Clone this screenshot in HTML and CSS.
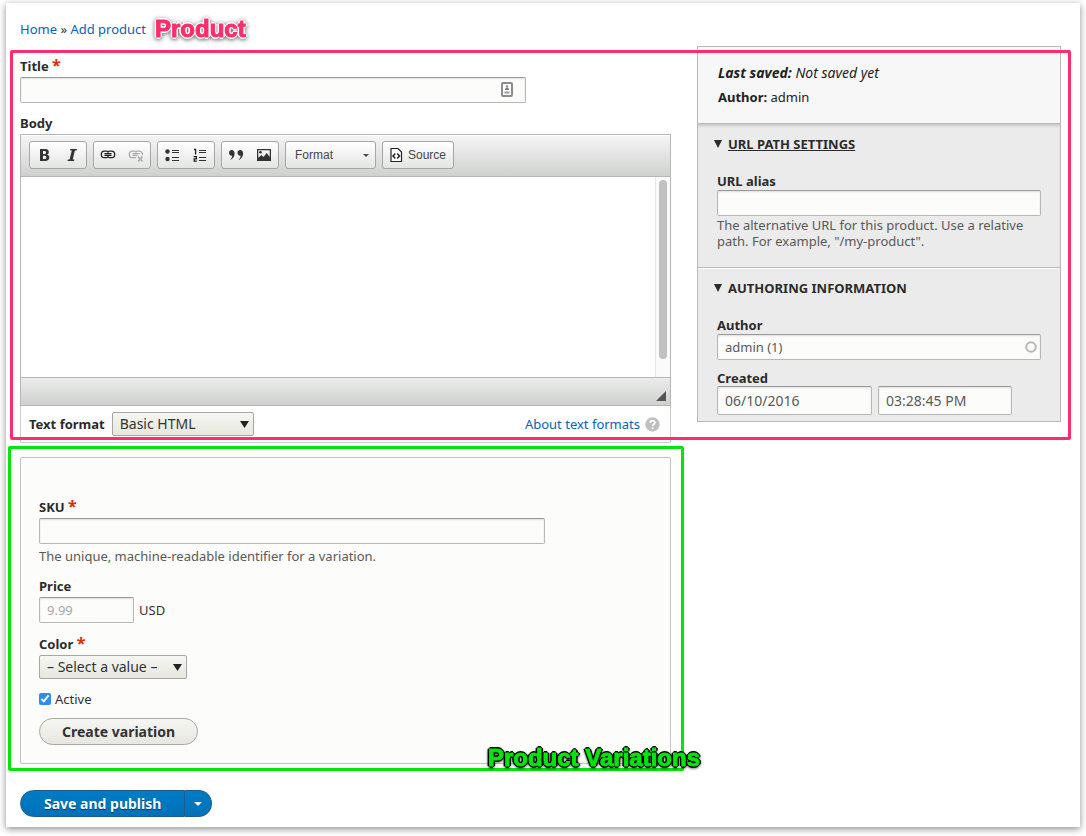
FILE: index.html
```
<!DOCTYPE html>
<html lang="en">
<head>
<meta charset="utf-8">
<meta name="viewport" content="width=device-width, initial-scale=1">
<title>Add product</title>
<link rel="stylesheet" href="styles.css">
</head>
<body>
<form class="sheet">
  <header class="top">
    <nav class="crumbs" aria-label="Breadcrumb"><a href="#">Home</a> » <a href="#">Add product</a></nav>
    <strong class="tag tag-product">Product</strong>
  </header>

  <section class="product">
    <div class="main">
      <div class="item">
        <label class="label" for="title">Title <span class="req">*</span></label>
        <div class="field wide">
          <input class="text" id="title" type="text">
          <svg class="card" width="12" height="15" viewBox="0 0 12 15" aria-hidden="true"><rect x="1" y="1" width="10" height="13" rx="1" fill="#fff" stroke="#8c8c8c" stroke-width="2"/><circle cx="6" cy="4.500" r="1.200" fill="#888"/><path d="M4 8c0-3 4-3 4 0z" fill="#777"/><path d="M3.500 10.500h5" stroke="#999" stroke-width="2"/></svg>
        </div>
      </div>

      <label class="label" for="body">Body</label>
      <div class="editor">
        <div class="toolbar">
          <div class="group">
            <button type="button" class="tool" aria-label="Bold"><svg width="16" height="16" viewBox="0 0 16 16"><path fill-rule="evenodd" d="M4 2h5c2.800 0 3.800 1.200 3.800 3 0 1.400-.7 2.300-1.800 2.700 1.500.3 2.300 1.300 2.300 2.900C13.300 12.900 11.800 14 9 14H4zm3 2v3h1.300c1.200 0 1.700-.5 1.700-1.500S9.400 4 8.300 4zm0 4.800V12h1.500c1.200 0 1.800-.6 1.800-1.600s-.6-1.600-1.800-1.600z"/></svg></button>
            <button type="button" class="tool" aria-label="Italic"><svg width="16" height="16" viewBox="0 0 16 16"><path d="M6.500 2H13l-.4 1.600h-1.700L8.700 12.400h1.800L10 14H3.500l.4-1.600h1.700l2.200-8.800H6z"/></svg></button>
          </div>
          <div class="group">
            <button type="button" class="tool" aria-label="Link"><svg width="16" height="16" viewBox="0 0 16 16"><g fill="none" stroke="#222" stroke-width="1.300"><path d="M8.500 5.500C8 4.500 7.500 4.200 6.500 4.200h-2a3.200 3.200 0 0 0 0 6.400h2c1 0 1.500-.4 2-1.300M7.500 5.500C8 4.500 8.500 4.200 9.500 4.200h2a3.200 3.200 0 0 1 0 6.400h-2c-1 0-1.500-.4-2-1.300M4.500 6.600h7M4.500 8.300h7"/></g></svg></button>
            <button type="button" class="tool" aria-label="Unlink" disabled><svg width="16" height="16" viewBox="0 0 16 16"><g fill="none" stroke="#aaa" stroke-width="1.300"><path d="M8.500 5.500C8 4.500 7.500 4.200 6.500 4.200h-2a3.200 3.200 0 0 0 0 6.400h3.500M7.500 5.500C8 4.500 8.500 4.200 9.500 4.200h2a3.200 3.200 0 0 1 3 3.500M4.500 6.600h7M4.500 8.300h5"/><path stroke-width="1.600" d="M10 9.500l4.500 5M14.500 9.500l-4.500 5"/></g></svg></button>
          </div>
          <div class="group">
            <button type="button" class="tool" aria-label="Bulleted list"><svg width="16" height="16" viewBox="0 0 16 16"><circle cx="3.500" cy="4.500" r="2.200"/><circle cx="3.500" cy="12" r="2.200"/><path d="M8 3h7v1H8zM8 5h7v1H8zM8 10h7v1H8zM8 13h7v1H8z"/></svg></button>
            <button type="button" class="tool" aria-label="Numbered list"><svg width="16" height="16" viewBox="0 0 16 16"><path d="M7 3h7v1H7zM7 5h7v1H7zM7 10h7v1H7zM7 13h7v1H7z"/><path fill="none" stroke="#222" stroke-width="1.300" d="M2 2.500h1.600v5M1.600 9.700h2.800v2.200H2.200v2.300h2.700"/></svg></button>
          </div>
          <div class="group">
            <button type="button" class="tool" aria-label="Block quote"><svg width="16" height="16" viewBox="0 0 16 16"><path d="M1 5.800C1 4 2.200 3 3.700 3c1.700 0 2.900 1.300 2.900 3.500 0 3.200-1.800 5.500-4.600 6.500 1.300-1.200 2.100-2.600 2.200-4.300C2.300 9 1 7.700 1 5.800zM9.500 5.800C9.500 4 10.700 3 12.200 3c1.700 0 2.900 1.300 2.900 3.500 0 3.200-1.800 5.500-4.600 6.500 1.300-1.200 2.100-2.600 2.200-4.300-1.900.3-3.200-1-3.200-2.900z"/></svg></button>
            <button type="button" class="tool" aria-label="Image"><svg width="16" height="16" viewBox="0 0 16 16"><path fill-rule="evenodd" d="M1 2h14v12H1zm1.300 1.300v7.500L5.500 8l2 2 3.200-4 3 4V3.300z"/><circle cx="4.500" cy="5.300" r="1.300"/></svg></button>
          </div>
          <button type="button" class="group combo">Format <svg width="6" height="3" viewBox="0 0 6 3" aria-hidden="true"><path d="M0 0h6L3 3z"/></svg></button>
          <button type="button" class="group source"><svg width="16" height="16" viewBox="0 0 16 16" aria-hidden="true"><path d="M3 1.500h7l3.500 3.500v9.500H3z" fill="#fff" stroke="#222" stroke-width="1.200"/><path d="M7.300 6.500L5 9l2.300 2.500M9.200 6.500L11.500 9l-2.300 2.500" fill="none" stroke="#222" stroke-width="1.500"/></svg>Source</button>
        </div>
        <div class="canvas">
          <textarea class="area" id="body"></textarea>
          <div class="track"><div class="thumb"></div></div>
        </div>
        <div class="status"><svg width="10" height="10" viewBox="0 0 10 10" aria-hidden="true"><path d="M10 0v10H0z" fill="#555"/></svg></div>
      </div>
      <div class="format-row">
        <label class="label" for="format">Text format</label>
        <span class="pick">
          <select class="select basic" id="format"><option>Basic HTML</option></select>
          <svg class="arrow" width="9" height="7" viewBox="0 0 9 7" aria-hidden="true"><path d="M0 0h9L4.500 7z"/></svg>
        </span>
        <a class="about" href="#">About text formats
          <svg width="15" height="15" viewBox="0 0 15 15" aria-hidden="true"><circle cx="7.500" cy="7.500" r="7.200" fill="#bfbfbf"/><path d="M5.200 5.800c0-3 4.800-2.800 4.700-.2 0 1.700-2.300 1.600-2.300 3.500" fill="none" stroke="#fff" stroke-width="1.800"/><circle cx="7.600" cy="11.300" r="1.100" fill="#fff"/></svg></a>
      </div>
    </div>

    <aside class="side">
      <div class="meta">
        <p class="saved"><em><b>Last saved:</b> Not saved yet</em></p>
        <p><b>Author:</b> admin</p>
      </div>
      <details class="panel path" open>
        <summary><svg width="8" height="8" viewBox="0 0 8 8" aria-hidden="true"><path d="M0 0h8L4 8z"/></svg><span class="linked">URL PATH SETTINGS</span></summary>
        <label class="label" for="alias">URL alias</label>
        <input class="text" id="alias" type="text">
        <p class="help">The alternative URL for this product. Use a relative path. For example, "/my-product".</p>
      </details>
      <details class="panel author" open>
        <summary><svg width="8" height="8" viewBox="0 0 8 8" aria-hidden="true"><path d="M0 0h8L4 8z"/></svg><span>AUTHORING INFORMATION</span></summary>
        <label class="label" for="author">Author</label>
        <div class="field">
          <input class="text" id="author" type="text" value="admin (1)">
          <svg class="ring" width="12" height="12" viewBox="0 0 12 12" aria-hidden="true"><circle cx="6" cy="6" r="4.800" fill="none" stroke="#b8b8b8" stroke-width="2"/></svg>
        </div>
        <label class="label created" for="date">Created</label>
        <div class="stamp">
          <input class="text date" id="date" type="text" value="06/10/2016">
          <input class="text time" type="text" value="03:28:45 PM" aria-label="Created time">
        </div>
      </details>
    </aside>
  </section>

  <section class="variations">
    <div class="item">
      <label class="label" for="sku">SKU <span class="req">*</span></label>
      <div class="wide"><input class="text" id="sku" type="text"></div>
      <p class="help">The unique, machine-readable identifier for a variation.</p>
    </div>
    <div class="item">
      <label class="label" for="price">Price</label>
      <div class="price-row"><input class="text price" id="price" type="text" placeholder="9.99"><span>USD</span></div>
    </div>
    <div class="item">
      <label class="label" for="color">Color <span class="req">*</span></label>
      <span class="pick">
        <select class="select color" id="color"><option>– Select a value –</option></select>
        <svg class="arrow" width="9" height="7" viewBox="0 0 9 7" aria-hidden="true"><path d="M0 0h9L4.500 7z"/></svg>
      </span>
    </div>
    <label class="check"><input type="checkbox" checked><span>Active</span></label>
    <button type="button" class="create">Create variation</button>
    <strong class="tag tag-variations">Product Variations</strong>
  </section>

  <div class="actions">
    <button type="submit" class="save">Save and publish</button><button type="button" class="more" aria-label="More save options"><svg width="8" height="4" viewBox="0 0 8 4"><path d="M0 0h8L4 4z" fill="#fff"/></svg></button>
  </div>
</form>
</body>
</html>
```
FILE: styles.css
```
* { box-sizing: border-box; }
body {
  margin: 0;
  padding: 3px 6px 9px;
  background: #fff;
  color: #333;
  font: 13px/18px "Noto Sans", "Open Sans", sans-serif;
}
p { margin: 0; }
a { color: #0a62b5; text-decoration: none; }
button, input, select, textarea { font: inherit; color: inherit; margin: 0; }
svg { display: block; flex: none; }

.sheet {
  padding: 12px 19px 10px 14px;
  background: #fff;
  box-shadow: 0 2px 7px rgba(0, 0, 0, .45);
}
.top { display: flex; align-items: center; gap: 9px; height: 28px; }
.tag {
  --edge: #fff;
  font: bold 24px/28px "Liberation Sans", Arial, sans-serif;
  -webkit-text-stroke: 1px currentColor;
  text-shadow: 2px 0 var(--edge), -2px 0 var(--edge), 0 2px var(--edge), 0 -2px var(--edge),
    1px 1px var(--edge), -1px 1px var(--edge), 1px -1px var(--edge), -1px -1px var(--edge);
  white-space: nowrap;
}
.tag-product { color: #ff2d6b; filter: drop-shadow(0 1px 2px rgba(0, 0, 0, .6)); }

.label { display: block; font-weight: bold; line-height: 18px; color: #2b2b2b; }
.req { color: #e62600; font-size: 16px; line-height: 0; }
.text {
  display: block;
  width: 100%;
  height: 26px;
  padding: 2px 7px;
  border: 1px solid #b8b8b8;
  border-top-color: #999;
  border-radius: 2px;
  background: #fcfcfa;
  box-shadow: inset 0 1px 2px rgba(0, 0, 0, .12);
  color: #595959;
}
.field { position: relative; }
.wide { max-width: 506px; }
.card { position: absolute; right: 13px; top: 5px; }
.ring { position: absolute; right: 4px; top: 7px; }
.help { color: #595959; line-height: 16px; }

.product {
  position: relative;
  display: grid;
  grid-template-columns: 651fr 364fr;
  gap: 26px;
  align-items: start;
  margin-top: 3px;
}
.product::after, .variations::after {
  content: "";
  position: absolute;
  border: 3px solid #ff2d6b;
  border-radius: 2px;
  pointer-events: none;
}
.product::after { inset: 4px -10px 3px; }
.main { padding-top: 11px; }
.main .item { margin-bottom: 11px; }
.main .item .label { margin-bottom: 2px; }

.editor { border: 1px solid #b6b6b6; margin-top: 2px; }
.toolbar {
  display: flex;
  flex-wrap: wrap;
  gap: 6px;
  padding: 6px 8px 7px;
  border-bottom: 1px solid #b6b6b6;
  background: linear-gradient(#f5f5f5, #cfd1cf);
  box-shadow: inset 0 1px #fff;
}
.group {
  display: flex;
  align-items: center;
  height: 28px;
  border: 1px solid #a6a6a6;
  border-radius: 3px;
  background: linear-gradient(#fff, #e4e4e4);
}
.tool { display: flex; align-items: center; justify-content: center; width: 28px; height: 26px; padding: 0; border: 0; background: none; fill: #333; }
.combo, .source { font: 12px/26px "Liberation Sans", Arial, sans-serif; color: #474747; fill: #474747; }
.combo { width: 91px; justify-content: space-between; padding: 0 6px 0 9px; }
.source { gap: 4px; padding: 0 7px 0 5px; }
.canvas { display: flex; height: 200px; }
.area { flex: 1; border: 0; padding: 8px; resize: none; background: #fff; }
.track { width: 15px; padding: 3px; border-left: 1px solid #e7e7e7; background: #fafafa; }
.thumb { width: 8px; height: 179px; border-radius: 4px; background: #c1c1c1; }
.status {
  display: flex;
  align-items: flex-end;
  justify-content: flex-end;
  height: 28px;
  padding: 4px;
  border-top: 1px solid #b6b6b6;
  background: linear-gradient(#ebebeb, #cfd1cf);
}
.format-row {
  display: flex;
  align-items: center;
  gap: 7px;
  padding: 6px 10px 6px 8px;
  border: 1px solid #ccc;
  border-top: 0;
}
.pick { position: relative; display: inline-flex; vertical-align: top; }
.select {
  appearance: none;
  height: 24px;
  padding: 0 24px 0 7px;
  border: 1px solid #a6a6a6;
  border-radius: 2px;
  background: linear-gradient(#f6f6f3, #e7e7df);
  font-size: 14px;
  line-height: 20px;
  color: #333;
}
.basic { width: 142px; }
.color { width: 148px; }
.arrow { position: absolute; right: 5px; top: 9px; fill: #222; pointer-events: none; }
.about { display: flex; align-items: center; gap: 5px; margin-left: auto; }

.side { border: 1px solid #b8b8b8; background: #ebebeb; }
.meta { padding: 17px 20px; border-bottom: 1px solid #b8b8b8; background: #f7f7f7; color: #222; }
.meta p + p { margin-top: 6px; }
.saved { font-size: 14px; }
.panel { padding: 0 19px; }
.panel + .panel { border-top: 1px solid #b8b8b8; box-shadow: inset 0 1px #fff; }
.path { padding-top: 11px; padding-bottom: 18px; box-shadow: inset 0 3px 3px -1px rgba(0, 0, 0, .15); }
.author { padding-top: 11px; padding-bottom: 6px; }
.panel summary {
  display: flex;
  align-items: center;
  gap: 6px;
  margin: 0 0 19px -3px;
  list-style: none;
  font-weight: bold;
  color: #2b2b2b;
  fill: #2b2b2b;
}
.linked { text-decoration: underline; }
.path .help { margin-top: 1px; }
.created { margin-top: 10px; line-height: 16px; }
.stamp { display: flex; gap: 6px; }
.stamp .text { height: 29px; font-size: 14px; }
.date { max-width: 155px; }
.time { max-width: 134px; }

.variations {
  position: relative;
  width: calc((100% - 26px) * 651 / 1015);
  margin-top: 14px;
  padding: 40px 18px 18px;
  border: 1px solid #c4c4c4;
  border-radius: 2px;
  background: #fcfcfa;
}
.variations::after { inset: -12px -14px -8px -13px; border-color: #00e60a; }
.variations .item { margin-bottom: 12px; }
.variations .label { margin-bottom: 2px; }
.variations .help { margin-top: 3px; line-height: 18px; }
.price-row { display: flex; align-items: center; gap: 5px; }
.price { width: 95px; }
.price::placeholder { color: #a9a9a9; }
.check { display: flex; align-items: center; gap: 4px; width: max-content; line-height: 16px; }
.check input { width: 12px; height: 12px; accent-color: #2f8cf7; }
.create {
  display: block;
  height: 27px;
  margin-top: 11px;
  padding: 0 22px;
  border: 1px solid #a6a6a6;
  border-radius: 14px;
  background: linear-gradient(#f6f6f3, #e7e7df);
  font-weight: bold;
  font-size: 14px;
}
.tag-variations {
  --edge: #000;
  position: absolute;
  right: -30px;
  bottom: -9px;
  z-index: 1;
  color: #00e60a;
  filter: drop-shadow(0 1px 1px rgba(0, 0, 0, .5));
}

.actions { display: flex; margin-top: 26px; }
.save, .more {
  height: 27px;
  border: 1px solid #1e5c90;
  background: linear-gradient(#007bc6, #0071b8);
  color: #fff;
}
.save { padding: 0 23px; border-radius: 14px 0 0 14px; font-weight: bold; font-size: 14px; text-shadow: 0 1px 1px rgba(0, 0, 0, .5); }
.more { padding: 0 9px; border-left: 0; border-radius: 0 14px 14px 0; }
```
